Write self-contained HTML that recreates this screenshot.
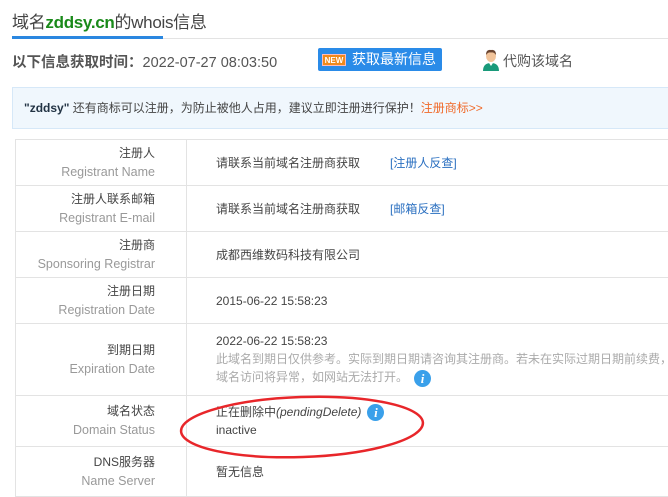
<!DOCTYPE html>
<html><head><meta charset="utf-8"><style>
*{margin:0;padding:0;box-sizing:border-box}
body{width:668px;height:493px;overflow:hidden;background:#fff;font-family:"Liberation Sans","Noto Sans CJK SC",sans-serif;color:#333;position:relative}
.abs{position:absolute;white-space:nowrap}
.title{left:12px;top:8px;font-size:17px;color:#444;letter-spacing:-0.3px}
.title b{color:#1a8a1a}
.uline{left:12px;top:36px;width:151px;height:3px;background:#2a87e0}
.gline{left:12px;top:38px;width:656px;height:1px;background:#e3e3e3}
.time{left:12px;top:51px;font-size:14.5px;color:#555}
.btn{left:318px;top:48px;width:124px;height:23px;background:#2a8be8;border-radius:2px;color:#fff;font-size:14px;line-height:23px;padding-left:34px}
.new{left:322px;top:54px;width:24px;height:12px;background:#f08a1c;color:#fff;font-size:8px;font-weight:bold;line-height:12px;text-align:center;border:1px solid #fbb}
.buy{left:503px;top:51px;font-size:14px;color:#555}
.notice{left:12px;top:87px;width:660px;height:42px;background:#f0f7fd;border:1px solid #d6e8f8;font-size:12px;line-height:40px;padding-left:11px;color:#444}
.notice b{color:#234}
.notice span{color:#f06a2a}
table{position:absolute;left:15px;top:139px;border-collapse:collapse;width:660px}
td{border:1px solid #e3e3e3;font-size:12px;vertical-align:middle}
td.l{width:171px;text-align:right;padding-right:31px;line-height:19px;color:#444}
td.l i{font-style:normal;color:#999;display:block;font-size:12.5px}
td.v{padding-left:29px;color:#444;line-height:18px}
a{color:#2a6fc0;text-decoration:none;margin-left:30px}
.info{display:inline-block;width:17px;height:17px;border-radius:50%;background:#3aa0ea;color:#fff;font-weight:bold;font-style:italic;font-family:"Liberation Serif",serif;font-size:13px;text-align:center;line-height:17px;vertical-align:middle;margin-left:6px}
.gray{color:#aaa}
</style></head><body>
<div class="abs title">域名<b>zddsy.cn</b>的whois信息</div>
<div class="abs gline"></div><div class="abs uline"></div>
<div class="abs time"><b>以下信息获取时间：</b>2022-07-27 08:03:50</div>
<div class="abs btn">获取最新信息</div>
<div class="abs new">NEW</div>
<svg class="abs" style="left:482px;top:49px" width="18" height="22" viewBox="0 0 18 22"><ellipse cx="9" cy="7" rx="5" ry="6" fill="#f2c49a"/><path d="M4 6 Q4 0 9 1 Q14 0 14 6 Q12 3 9 3.5 Q6 3 4 6Z" fill="#6b4530"/><path d="M1 22 Q1 14 9 14 Q17 14 17 22Z" fill="#1a9a7a"/><path d="M7 14 L9 17 L11 14Z" fill="#fff"/></svg>
<div class="abs buy">代购该域名</div>
<div class="abs notice"><b>"zddsy"</b> 还有商标可以注册，为防止被他人占用，建议立即注册进行保护！<span>注册商标&gt;&gt;</span></div>
<table>
<tr style="height:46px"><td class="l">注册人<i>Registrant Name</i></td><td class="v">请联系当前域名注册商获取<a>[注册人反查]</a></td></tr>
<tr style="height:46px"><td class="l">注册人联系邮箱<i>Registrant E-mail</i></td><td class="v">请联系当前域名注册商获取<a>[邮箱反查]</a></td></tr>
<tr style="height:46px"><td class="l">注册商<i>Sponsoring Registrar</i></td><td class="v">成都西维数码科技有限公司</td></tr>
<tr style="height:46px"><td class="l">注册日期<i>Registration Date</i></td><td class="v">2015-06-22 15:58:23</td></tr>
<tr style="height:72px"><td class="l">到期日期<i>Expiration Date</i></td><td class="v">2022-06-22 15:58:23<br><span class="gray">此域名到期日仅供参考。实际到期日期请咨询其注册商。若未在实际过期日期前续费，<br>域名访问将异常，如网站无法打开。</span><span class="info">i</span></td></tr>
<tr style="height:51px"><td class="l">域名状态<i>Domain Status</i></td><td class="v">正在删除中<em>(pendingDelete)</em><span class="info">i</span><br>inactive</td></tr>
<tr style="height:50px"><td class="l">DNS服务器<i>Name Server</i></td><td class="v">暂无信息</td></tr>
</table>
<svg class="abs" style="left:178px;top:393px" width="250" height="68" viewBox="0 0 250 68"><ellipse cx="124" cy="34" rx="121" ry="30" fill="none" stroke="#e8262a" stroke-width="2.5" transform="rotate(-2 124 34)"/></svg>
</body></html>
